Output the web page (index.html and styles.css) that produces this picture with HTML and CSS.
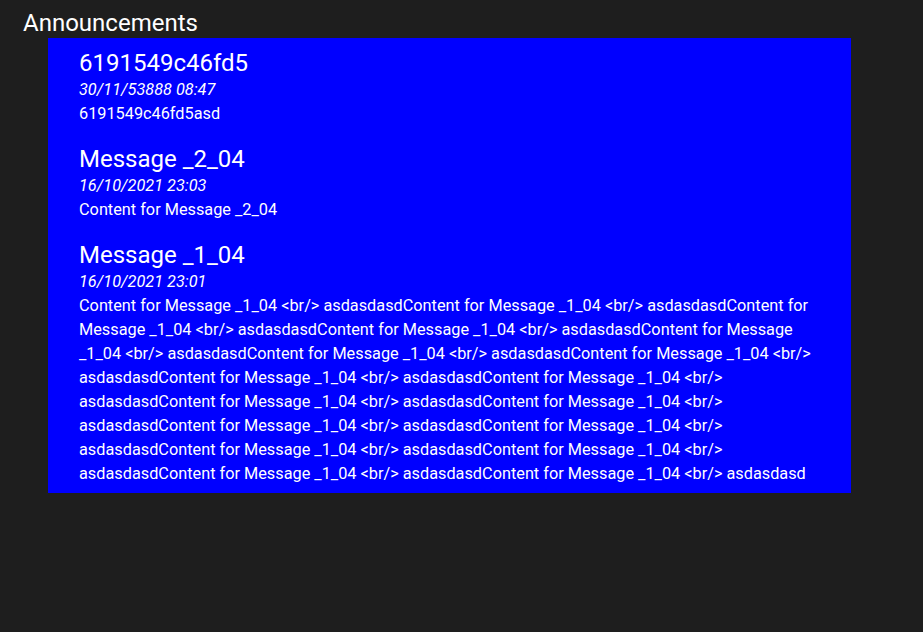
FILE: index.html
```html
<!DOCTYPE html>
<html>
<head>
<meta charset="utf-8">
<link rel="stylesheet" href="styles.css">
</head>
<body>
<div class="page">
  <h1 class="title">Announcements</h1>
  <div class="board">
    <div class="item">
      <h2 class="item-title">6191549c46fd5</h2>
      <div class="item-date">30/11/53888 08:47</div>
      <div class="item-body">6191549c46fd5asd</div>
    </div>
    <div class="item">
      <h2 class="item-title">Message _2_04</h2>
      <div class="item-date">16/10/2021 23:03</div>
      <div class="item-body">Content for Message _2_04</div>
    </div>
    <div class="item">
      <h2 class="item-title">Message _1_04</h2>
      <div class="item-date">16/10/2021 23:01</div>
      <div class="item-body">Content for Message _1_04 &lt;br/&gt; asdasdasdContent for Message _1_04 &lt;br/&gt; asdasdasdContent for Message _1_04 &lt;br/&gt; asdasdasdContent for Message _1_04 &lt;br/&gt; asdasdasdContent for Message _1_04 &lt;br/&gt; asdasdasdContent for Message _1_04 &lt;br/&gt; asdasdasdContent for Message _1_04 &lt;br/&gt; asdasdasdContent for Message _1_04 &lt;br/&gt; asdasdasdContent for Message _1_04 &lt;br/&gt; asdasdasdContent for Message _1_04 &lt;br/&gt; asdasdasdContent for Message _1_04 &lt;br/&gt; asdasdasdContent for Message _1_04 &lt;br/&gt; asdasdasdContent for Message _1_04 &lt;br/&gt; asdasdasdContent for Message _1_04 &lt;br/&gt; asdasdasdContent for Message _1_04 &lt;br/&gt; asdasdasdContent for Message _1_04 &lt;br/&gt; asdasdasdContent for Message _1_04 &lt;br/&gt; asdasdasd</div>
    </div>
  </div>
</div>
</body>
</html>
```
FILE: styles.css
```css
html, body {
  margin: 0;
  padding: 0;
  background: #1e1e1e;
  height: 100%;
}
body {
  font-family: Roboto, "Liberation Sans", sans-serif;
  color: #ffffff;
}
.page {
  padding: 8px 0 0 23px;
}
.title {
  margin: 0;
  font-size: 24px;
  font-weight: 400;
  line-height: 30px;
  height: 30px;
}
.board {
  margin-left: 25px;
  width: 741px;
  background: #0000ff;
  padding: 10px 31px 7px 31px;
}
.item + .item {
  margin-top: 18px;
}
.item-title {
  margin: 0;
  font-size: 24px;
  font-weight: 400;
  line-height: 30px;
}
.item-date {
  font-size: 16.3px;
  font-style: italic;
  line-height: 24px;
}
.item-body {
  font-size: 16.3px;
  line-height: 24px;
}
```
